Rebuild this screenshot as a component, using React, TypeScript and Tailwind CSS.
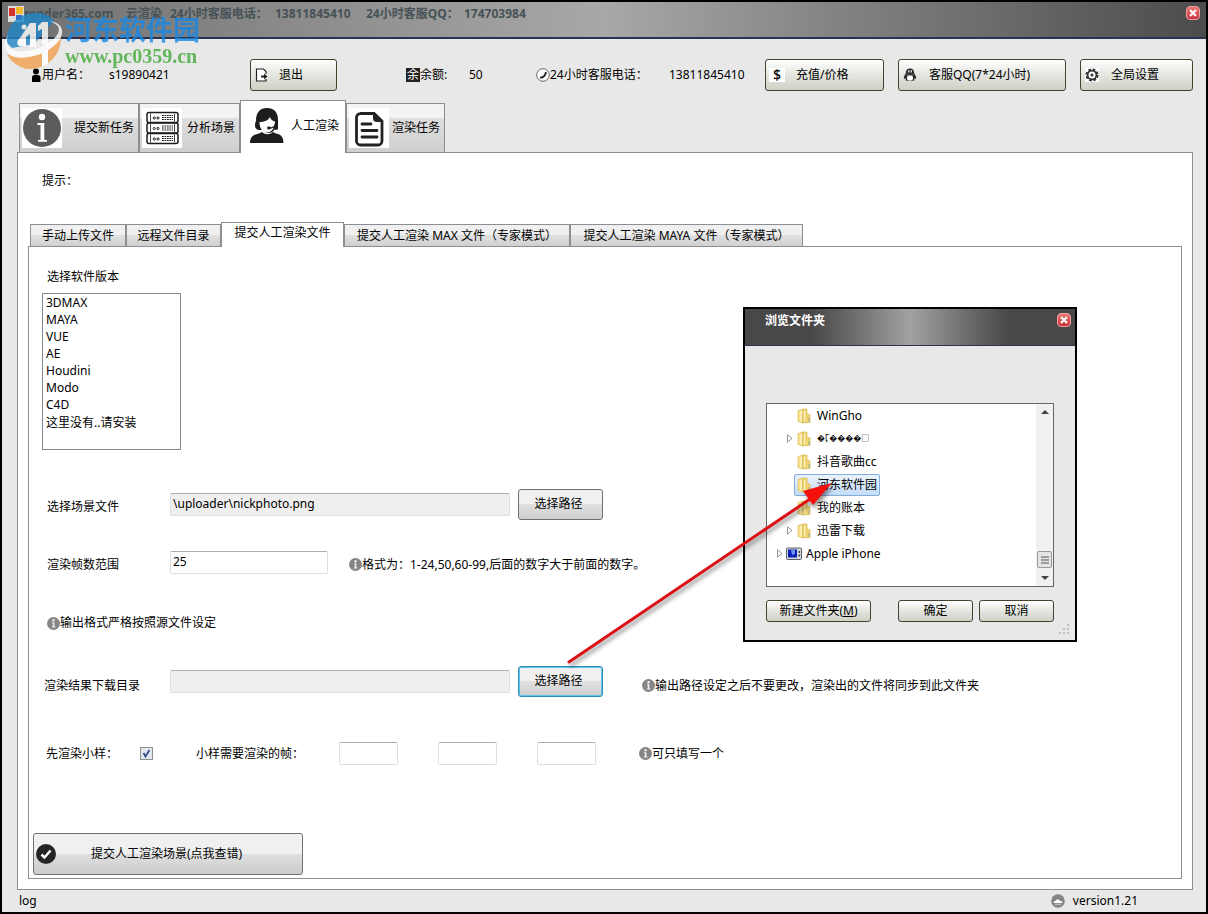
import { useState } from "react";
import type { ReactNode } from "react";

const softwareList = ["3DMAX", "MAYA", "VUE", "AE", "Houdini", "Modo", "C4D", "这里没有..请安装"];

const folders = [
    { name: "WinGho", expandable: false },
    { name: "�Ӷ����□", expandable: true, garbled: true },
    { name: "抖音歌曲cc", expandable: false },
    { name: "河东软件园", expandable: false },
    { name: "我的账本", expandable: false },
    { name: "迅雷下载", expandable: true },
];

function InfoDot() {
    return (
        <svg viewBox="0 0 13 13" className="h-[13px] w-[13px] shrink-0">
            <circle cx="6.5" cy="6.5" r="6.5" fill="#858585" />
            <circle cx="6.5" cy="3.2" r="1.2" fill="#eee" />
            <path d="M5 5.3h2.4v4.2h1v1H4.8v-1h1V6.3H5z" fill="#eee" />
        </svg>
    );
}

function InfoIcon() {
    return (
        <svg viewBox="0 0 40 40" className="h-10 w-10">
            <rect width="40" height="40" fill="#fff" />
            <circle cx="20" cy="20" r="19" fill="#5c5c5c" />
            <circle cx="20" cy="9" r="3.2" fill="#fff" />
            <path d="M15.500 15h6.800v17h2.700v1.800h-9V32h2.500V17h-3z" fill="#fff" />
        </svg>
    );
}

function ServerIcon() {
    return (
        <svg viewBox="0 0 40 40" className="h-10 w-10">
            <rect width="40" height="40" fill="#fff" />
            <g stroke="#1c1c1c" fill="none">
                {[4.5, 15, 25.5].map((y) => (
                    <g key={y}>
                        <rect x="5" y={y} width="31" height="10" rx="2" strokeWidth="1.500" />
                        <path d={`M8.5 ${y + 1}v8M32.5 ${y + 1}v8`} strokeWidth=".8" />
                        <circle cx="12.300" cy={y + 5.5} r="1.100" strokeWidth="1" />
                        <circle cx="16" cy={y + 5.5} r="1.100" strokeWidth="1" />
                        <path d={`M20 ${y + 3}h11M20 ${y + 5}h11M20 ${y + 7}h11`} strokeWidth="1.100" strokeDasharray="1.800 0.700" />
                    </g>
                ))}
            </g>
        </svg>
    );
}

function AgentIcon() {
    return (
        <svg viewBox="0 0 40 40" className="h-10 w-10">
            <path d="M3 37c0-6 3.500-8.500 9-9.500l3-1.500c3 3 8 3 11 0l3 1.500c5 1 7.500 3.500 7.500 9.500z" fill="#1d1d1d" />
            <path d="M9 15C9 6 13 2 20 2s11 4 11 12v9c-1 1-2.500 1-3.500.5-2.500 4.500-9 5-12 0C11 25 8 23 8 20c0-2 0-3 1-5z" fill="#1d1d1d" />
            <path d="M12.500 16c5 0 9-2 10.500-5 1 3 3 4 5 4.500 0 6.500-3.500 11-8 11s-7.500-4.500-7.500-10.500z" fill="#fff" />
            <path d="M28.500 18c-.5 3-3 4-6 4" stroke="#1d1d1d" strokeWidth="1.500" fill="none" />
            <ellipse cx="22" cy="22" rx="2" ry="1.400" fill="#1d1d1d" />
        </svg>
    );
}

function DocIcon() {
    return (
        <svg viewBox="0 0 40 40" className="h-10 w-10">
            <rect width="40" height="40" fill="#fff" />
            <path d="M11 5.500h14l8 7.500v20a4 4 0 0 1-4 4H11.500a4 4 0 0 1-4-4V9.500a4 4 0 0 1 4-4z" fill="none" stroke="#222" strokeWidth="2.800" />
            <path d="M24 4.500v5.500a4 4 0 0 0 4 4h6L25.500 4.500z" fill="#222" />
            <path d="M13 16h9M13 22.500h15M13 29h15" stroke="#222" strokeWidth="2.800" strokeLinecap="round" />
        </svg>
    );
}

function ExitIcon() {
    return (
        <svg viewBox="0 0 14 14" className="h-3.5 w-3.5">
            <path d="M11 6V3.500L8.500 1H1.500v12H11v-2" fill="#fff" stroke="#222" strokeWidth="1.200" />
            <path d="M6 7.500h3V5.500l3.500 3-3.500 3V9.500H6z" fill="#222" />
        </svg>
    );
}

function PenguinIcon() {
    return (
        <svg viewBox="0 0 14 14" className="h-3.5 w-3.5">
            <path d="M7 .5c2.800 0 4.200 2 4.200 4.500 0 1 2 2.800 2 5 0 1.200-.8 1-1.400.3C11.500 12 10 13 7 13S2.500 12 2.200 10.300C1.500 11 .8 11.200.8 10c0-2.200 2-4 2-5C2.800 2.500 4.200.5 7 .5z" fill="#2b2b2b" />
            <ellipse cx="7" cy="10" rx="3" ry="2.700" fill="#fff" />
            <path d="M5.800 2.300v2.200M8.200 2.300v2.200" stroke="#fff" strokeWidth="1.200" />
            <path d="M3.500 6.500c2 1.300 5 1.300 7 0" stroke="#9a9a9a" strokeWidth=".9" fill="none" />
            <path d="M2 13c1-1.200 3-1 3.800 0zM8.200 13c1-1.200 3-1 3.800 0z" fill="#555" />
        </svg>
    );
}

function GearIcon() {
    return (
        <svg viewBox="0 0 14 14" className="h-3.5 w-3.5">
            <rect width="14" height="14" fill="#fff" />
            <circle cx="7" cy="7" r="5.700" fill="none" stroke="#333" strokeWidth="1.800" strokeDasharray="2.700 1.777" />
            <circle cx="7" cy="7" r="4.400" fill="none" stroke="#333" strokeWidth="1.800" />
            <circle cx="7" cy="7" r="1.500" fill="#333" />
        </svg>
    );
}

function FolderIcon() {
    return (
        <svg viewBox="0 0 14 16" className="h-4 w-3.5 shrink-0">
            <path d="M1 2.500 6 1v14l-5-1.500z" fill="#f7e08c" stroke="#d9b64c" strokeWidth=".6" />
            <path d="M6 1h4v5l3 1v7.500L6 15z" fill="#f1d36f" stroke="#d2ae45" strokeWidth=".6" />
            <path d="M7.500 2.500v11M4 3v10" stroke="#fff6c6" strokeWidth="1.300" />
            <path d="M12 10v4" stroke="#7aa8a8" strokeWidth=".8" />
        </svg>
    );
}

function PhoneDeviceIcon() {
    return (
        <svg viewBox="0 0 16 14" className="h-3.5 w-4 shrink-0">
            <rect x=".5" y="1" width="15" height="11.500" rx="1" fill="#d5d8d8" stroke="#55606a" />
            <rect x="2" y="2.500" width="9" height="8" fill="#0a1fb8" />
            <path d="M5 3h4v4L6 8z" fill="#6c92f2" />
            <circle cx="13.300" cy="5" r=".9" fill="#333" />
            <circle cx="13.300" cy="8.500" r=".9" fill="#333" />
        </svg>
    );
}

function Expander({ visible = true }: { visible?: boolean }) {
    return (
        <svg viewBox="0 0 8 9" className="h-[9px] w-2">
            {visible && <path d="M1.500 .8v7.400L6 4.500z" fill="#fff" stroke="#8a8a8a" strokeWidth=".9" />}
        </svg>
    );
}

function CloseButton() {
    return (
        <button aria-label="关闭" className="flex h-3.5 w-3.5 items-center justify-center rounded-sm border border-[#f0a0a0] bg-gradient-to-b from-[#e87878] to-[#c92f3d]">
            <svg viewBox="0 0 8 8" className="h-2 w-2">
                <path d="M1 1l6 6M7 1L1 7" stroke="#fff" strokeWidth="2" />
            </svg>
        </button>
    );
}

function GlossButton({ icon, children, className }: { icon: ReactNode; children: ReactNode; className: string }) {
    return (
        <button className={`flex h-8 items-center rounded-[3px] border border-[#45432f] bg-gradient-to-b from-white via-[#e4e6e0] to-[#cfd0c5] px-1 ${className}`}>
            <span className="flex h-3.5 w-3.5 items-center justify-center">{icon}</span>
            {children}
        </button>
    );
}

function PathButton({ focused = false }: { focused?: boolean }) {
    return (
        <button
            className={`ml-2 h-[31px] w-[85px] rounded-[3px] border bg-gradient-to-b from-[#f0f0f0] from-50% via-[#e0e0e0] via-50% to-[#cecece] pr-1 pb-0.5 ${
                focused ? "border-[#2c8db5] ring-1 ring-[#5fc3e6] ring-inset" : "border-[#707070]"
            }`}
        >
            选择路径
        </button>
    );
}

function MainTab({ icon, label, active = false, className }: { icon: ReactNode; label: string; active?: boolean; className: string }) {
    return (
        <button
            role="tab"
            aria-selected={active}
            className={`flex items-center justify-between border border-[#8c8e94] ${
                active
                    ? "h-[53px] border-b-0 bg-white pr-1.5 pb-0.5 pl-1.5"
                    : "h-[50px] bg-gradient-to-b from-[#f3f3f3] from-30% via-[#dedede] via-30% to-[#cfcfcf] pr-1 pl-0.5"
            } ${className}`}
        >
            {icon}
            {label}
        </button>
    );
}

function SubTab({ label, active = false, className }: { label: string; active?: boolean; className: string }) {
    return (
        <button
            role="tab"
            aria-selected={active}
            className={`border border-[#8c8e94] whitespace-nowrap ${
                active ? "h-[25px] border-b-0 bg-white pb-1" : "h-[23px] bg-gradient-to-b from-[#f0f0f0] from-50% via-[#e0e0e0] via-50% to-[#d0d0d0]"
            } ${className}`}
        >
            {label}
        </button>
    );
}

const fieldClass = "h-[23px] rounded-[2px] border border-[#dfdfdf] border-t-[#abadb3] px-0.5 pb-0.5 outline-none";

function BrowseDialog() {
    const [selected, setSelected] = useState("河东软件园");
    const dialogButton =
        "h-[22px] rounded-[3px] border border-[#45432f] bg-gradient-to-b from-white via-[#e4e6e0] to-[#cfd0c5]";

    return (
        <section role="dialog" aria-label="浏览文件夹" className="absolute top-[305px] left-[741px] w-[334px] border-2 border-black bg-[#e8e8e8]">
            <div className="flex h-[37px] justify-between border-b border-[#2b3350] bg-gradient-to-r from-[#484848] from-20% via-[#a2a2a2] via-50% to-[#484848] to-80% pt-1 pr-1 pl-5">
                <h2 className="font-bold text-white">浏览文件夹</h2>
                <CloseButton />
            </div>
            <div className="px-[21px] pt-[57px] pb-[18px]">
                <div className="flex h-[184px] border border-[#666] bg-white">
                    <ul className="flex-1">
                        {folders.map((folder) => (
                            <li key={folder.name} className="flex h-[23px] items-center pl-[19px]">
                                <Expander visible={folder.expandable} />
                                <button
                                    onClick={() => setSelected(folder.name)}
                                    className={`flex h-[22px] items-center gap-1.5 rounded-[2px] border px-0.5 ${
                                        selected === folder.name ? "border-[#84acdd] bg-gradient-to-b from-[#eaf3fd] to-[#c4dcf8]" : "border-transparent"
                                    }`}
                                >
                                    <FolderIcon />
                                    <span className={folder.garbled ? "text-[8px]" : ""}>{folder.name}</span>
                                </button>
                            </li>
                        ))}
                        <li className="flex h-[23px] items-center pl-[9px]">
                            <Expander />
                            <button className="flex items-center gap-1 px-0.5">
                                <PhoneDeviceIcon />
                                Apple iPhone
                            </button>
                        </li>
                    </ul>
                    <div className="flex w-[17px] flex-col items-center bg-[#f1f1f1] py-1.5">
                        <svg viewBox="0 0 8 4" className="h-1 w-2"><path d="M0 4l4-4 4 4z" fill="#444" /></svg>
                        <div className="mt-auto mb-2 flex h-[17px] w-[15px] items-center justify-center rounded-[2px] border border-[#999] bg-[#e4e4e4]">
                            <svg viewBox="0 0 8 8" className="h-2 w-2"><path d="M0 1h8M0 4h8M0 7h8" stroke="#555" /></svg>
                        </div>
                        <svg viewBox="0 0 8 4" className="h-1 w-2"><path d="M0 0l4 4 4-4z" fill="#444" /></svg>
                    </div>
                </div>
                <div className="mt-[13px] flex gap-1.5">
                    <button className={`mr-auto w-[105px] ${dialogButton}`}>
                        新建文件夹(<u>M</u>)
                    </button>
                    <button className={`w-[75px] ${dialogButton}`}>确定</button>
                    <button className={`w-[75px] ${dialogButton}`}>取消</button>
                </div>
            </div>
            <svg viewBox="0 0 10 10" className="absolute right-1.5 bottom-1.5 h-2.5 w-2.5">
                <path d="M8 0h2v2H8zM8 4h2v2H8zM8 8h2v2H8zM4 4h2v2H4zM4 8h2v2H4zM0 8h2v2H0z" fill="#bdbdbd" />
            </svg>
        </section>
    );
}

function Watermark() {
    return (
        <div className="pointer-events-none absolute top-2 left-0.5 flex opacity-80">
            <svg viewBox="0 0 60 60" className="h-[60px] w-[60px] shrink-0">
                <path d="M2 32C3 14 15 3 32 3c8 0 14 3 18 8L30 34 8 38z" fill="#1f86c8" />
                <path d="M3 44c10 5 26 4 37-3 9-6 14-13 16-21 3 14-2 28-15 35-4 2-8 3-12 4h-7C13 56 6 51 3 44z" fill="#f2a04e" />
                <path d="M38 42l6-4v16l-6 3z" fill="#fff" />
                <path d="M4 25C1 34 5 40 13 41c15 2 33-6 40-16 4-6 2-11-8-14 12 1 16 9 11 18C48 42 26 50 11 47 0 44-1 34 4 25z" fill="#fff" />
                <path d="M26 13h6v24h-6V24l-4 3v9h-6c-3 0-4-5 0-8zM38 12h6v22h-6V19l-4 2v-5z" fill="#fff" />
                <circle cx="20" cy="17" r="2.500" fill="#fff" />
            </svg>
            <div className="pt-1 pl-px whitespace-nowrap">
                <div className="text-[27px] leading-8 font-bold text-[#1887e4]">河东软件园</div>
                <div className="font-['Liberation_Serif',serif] text-xl leading-5 font-bold text-[#43aa38]">www.pc0359.cn</div>
            </div>
        </div>
    );
}

export default function App() {
    const [sceneFile, setSceneFile] = useState("\\uploader\\nickphoto.png");
    const [frames, setFrames] = useState("25");
    const [preview, setPreview] = useState(true);

    return (
        <main className="relative flex min-h-screen flex-col border-2 border-black bg-[#e8e8e8] font-['Noto_Sans','Noto_Sans_CJK_SC',sans-serif] text-xs text-black">
            <header className="flex h-[37px] justify-between border-b-2 border-[#2b3350] bg-gradient-to-r from-[#707070] via-[#a8a8a8] to-[#4c4c4c] pt-1 pr-1.5 pl-1.5">
                <div className="flex">
                    <svg viewBox="0 0 16 16" className="h-4 w-4">
                        <rect width="16" height="16" fill="#ddd" />
                        <rect x="1" y="2" width="6" height="8" fill="#d4322c" />
                        <rect x="8" y="1" width="7" height="7" fill="#f4b92e" />
                        <rect x="8" y="9" width="6" height="5" fill="#3c68c0" />
                    </svg>
                    <h1 className="grid grid-cols-[102px_44px_105px_91px_98px_auto] font-bold whitespace-nowrap text-[#465256]">
                        <span>render365.com</span>
                        <span>云渲染</span>
                        <span>24小时客服电话：</span>
                        <span>13811845410</span>
                        <span>24小时客服QQ：</span>
                        <span>174703984</span>
                    </h1>
                </div>
                <CloseButton />
            </header>

            <div className="flex items-center pt-5 pr-[13px] pl-7 whitespace-nowrap">
                <svg viewBox="0 0 12 14" className="h-3.5 w-3">
                    <circle cx="6" cy="3.500" r="3" />
                    <path d="M2 14V9.500C2 7 4 7 6 7s4.500 0 4.500 2.500V14z" />
                </svg>
                <span className="w-[67px]">用户名：</span>
                <span className="w-[141px]">s19890421</span>
                <GlossButton icon={<ExitIcon />} className="w-[87px] gap-2.5">退出</GlossButton>
                <span className="ml-[69px] flex h-3.5 w-3.5 items-center justify-center bg-[#222] text-white">余</span>
                <span className="w-[49px]">余额:</span>
                <span className="w-[67px]">50</span>
                <svg viewBox="0 0 14 14" className="h-3.5 w-3.5">
                    <circle cx="7" cy="7" r="6.300" fill="#fff" stroke="#666" />
                    <path d="M4 9.500C7 10 9.500 7.500 10 4" fill="none" stroke="#222" strokeWidth="1.800" />
                </svg>
                <span className="w-[119px]">24小时客服电话：</span>
                <span>13811845410</span>
                <div className="ml-auto flex gap-3.5">
                    <GlossButton icon={<span className="bg-white px-1 text-sm leading-none font-medium">$</span>} className="w-[119px] gap-3">充值/价格</GlossButton>
                    <GlossButton icon={<PenguinIcon />} className="w-[168px] gap-3">客服QQ(7*24小时)</GlossButton>
                    <GlossButton icon={<GearIcon />} className="w-[113px] gap-3">全局设置</GlossButton>
                </div>
            </div>

            <div role="tablist" className="relative z-10 mt-[9px] -mb-px ml-[17px] flex items-end">
                <MainTab icon={<InfoIcon />} label="提交新任务" className="w-[120px]" />
                <MainTab icon={<ServerIcon />} label="分析场景" className="w-[101px]" />
                <MainTab icon={<AgentIcon />} label="人工渲染" active className="w-[106px]" />
                <MainTab icon={<DocIcon />} label="渲染任务" className="w-[99px]" />
            </div>

            <div className="mr-[13px] ml-[15px] flex flex-1 flex-col border border-[#8c8e94] bg-white px-2.5 pt-5 pb-2.5">
                <p className="pl-3.5">提示：</p>

                <div role="tablist" className="relative z-10 mt-[33px] -mb-px ml-0.5 flex items-end">
                    <SubTab label="手动上传文件" className="w-24" />
                    <SubTab label="远程文件目录" className="w-[95px]" />
                    <SubTab label="提交人工渲染文件" active className="w-[123px]" />
                    <SubTab label="提交人工渲染 MAX 文件（专家模式）" className="w-[226px]" />
                    <SubTab label="提交人工渲染 MAYA 文件（专家模式）" className="w-[233px]" />
                </div>

                <form className="flex-1 border border-[#8c8e94] pt-[22px] pb-[3px] whitespace-nowrap" onSubmit={(e) => e.preventDefault()}>
                    <label htmlFor="software" className="block pl-[18px]">选择软件版本</label>
                    <select id="software" size={8} className="mt-2 ml-[13px] block h-[157px] w-[139px] appearance-none overflow-hidden border border-[#828790] pl-px outline-none">
                        {softwareList.map((name) => (
                            <option key={name} className="h-[17px] min-h-0 p-0 pl-0.5 leading-[17px]">{name}</option>
                        ))}
                    </select>

                    <div className="mt-[39px] flex items-center pl-[18px]">
                        <label htmlFor="scene" className="w-[123px] pt-1">选择场景文件</label>
                        <input id="scene" value={sceneFile} onChange={(e) => setSceneFile(e.target.value)} className={`w-[340px] bg-[#efefef] ${fieldClass}`} />
                        <PathButton />
                    </div>

                    <div className="mt-[31px] flex items-center pl-[18px]">
                        <label htmlFor="frames" className="w-[123px] pt-1">渲染帧数范围</label>
                        <input id="frames" value={frames} onChange={(e) => setFrames(e.target.value)} className={`w-[158px] ${fieldClass}`} />
                        <span className="ml-[21px] flex items-center pt-1">
                            <InfoDot />
                            格式为：1-24,50,60-99,后面的数字大于前面的数字。
                        </span>
                    </div>

                    <p className="mt-[41px] flex items-center pl-[18px]">
                        <InfoDot />
                        输出格式严格按照源文件设定
                    </p>

                    <div className="mt-[35px] flex items-center pl-[15px]">
                        <label htmlFor="output" className="w-[126px] pt-2">渲染结果下载目录</label>
                        <input id="output" className={`w-[340px] bg-[#efefef] ${fieldClass}`} />
                        <PathButton focused />
                        <span className="ml-[39px] flex items-center pt-2">
                            <InfoDot />
                            输出路径设定之后不要更改，渲染出的文件将同步到此文件夹
                        </span>
                    </div>

                    <div className="mt-[45px] flex items-center pl-[17px]">
                        <label htmlFor="preview" className="w-[94px]">先渲染小样：</label>
                        <span className="relative flex">
                            <input
                                id="preview"
                                type="checkbox"
                                checked={preview}
                                onChange={(e) => setPreview(e.target.checked)}
                                className="h-[13px] w-[13px] appearance-none border border-[#8e8f8f] bg-[#e4e8ee]"
                            />
                            {preview && (
                                <svg viewBox="0 0 13 13" className="pointer-events-none absolute inset-0">
                                    <path d="M3.500 6l2 3.500L9.500 3" fill="none" stroke="#34508c" strokeWidth="1.800" />
                                </svg>
                            )}
                        </span>
                        <label htmlFor="sample1" className="ml-[43px] w-[143px]">小样需要渲染的帧：</label>
                        <div className="flex gap-10">
                            <input id="sample1" className={`w-[59px] ${fieldClass}`} />
                            <input aria-label="帧 2" className={`w-[59px] ${fieldClass}`} />
                            <input aria-label="帧 3" className={`w-[59px] ${fieldClass}`} />
                        </div>
                        <span className="ml-[43px] flex items-center">
                            <InfoDot />
                            可只填写一个
                        </span>
                    </div>

                    <button className="mt-[68px] ml-1 flex h-[42px] w-[270px] items-center rounded-[3px] border border-[#707070] bg-gradient-to-b from-[#f0f0f0] from-50% via-[#e0e0e0] via-50% to-[#cbcbcb] pl-0.5">
                        <svg viewBox="0 0 20 20" className="h-5 w-5">
                            <circle cx="10" cy="10" r="10" fill="#252525" />
                            <path d="M5.500 10.500l3 3 6-7" fill="none" stroke="#fff" strokeWidth="2.500" />
                        </svg>
                        <span className="ml-[35px]">提交人工渲染场景(点我查错)</span>
                    </button>
                </form>
            </div>

            <footer className="flex h-[22px] items-center justify-between pr-[68px] pl-[17px]">
                <span>log</span>
                <span className="flex items-center gap-2">
                    <svg viewBox="0 0 14 14" className="h-3.5 w-3.5">
                        <circle cx="7" cy="7" r="6.800" fill="#858585" />
                        <path d="M2.500 9c0-1.500 1-2.200 2-2 .8-2 3.800-2 4.500 0 1.500-.2 2.500.6 2.500 2z" fill="#fff" />
                        <path d="M4 10.300h6" stroke="#ddd" strokeWidth=".8" />
                    </svg>
                    version1.21
                </span>
            </footer>

            <BrowseDialog />

            {/* pointer from the path button to the chosen folder */}
            <svg viewBox="0 0 280 190" className="pointer-events-none absolute top-[478px] left-[560px] h-[190px] w-[280px] drop-shadow-[2px_3px_2px_rgba(0,0,0,0.45)]">
                <path d="M7 182L254 15" stroke="#dc1116" strokeWidth="3" strokeLinecap="round" />
                <path d="M270 3L241 11l10 14z" fill="#f5100c" />
            </svg>

            <Watermark />
        </main>
    );
}
